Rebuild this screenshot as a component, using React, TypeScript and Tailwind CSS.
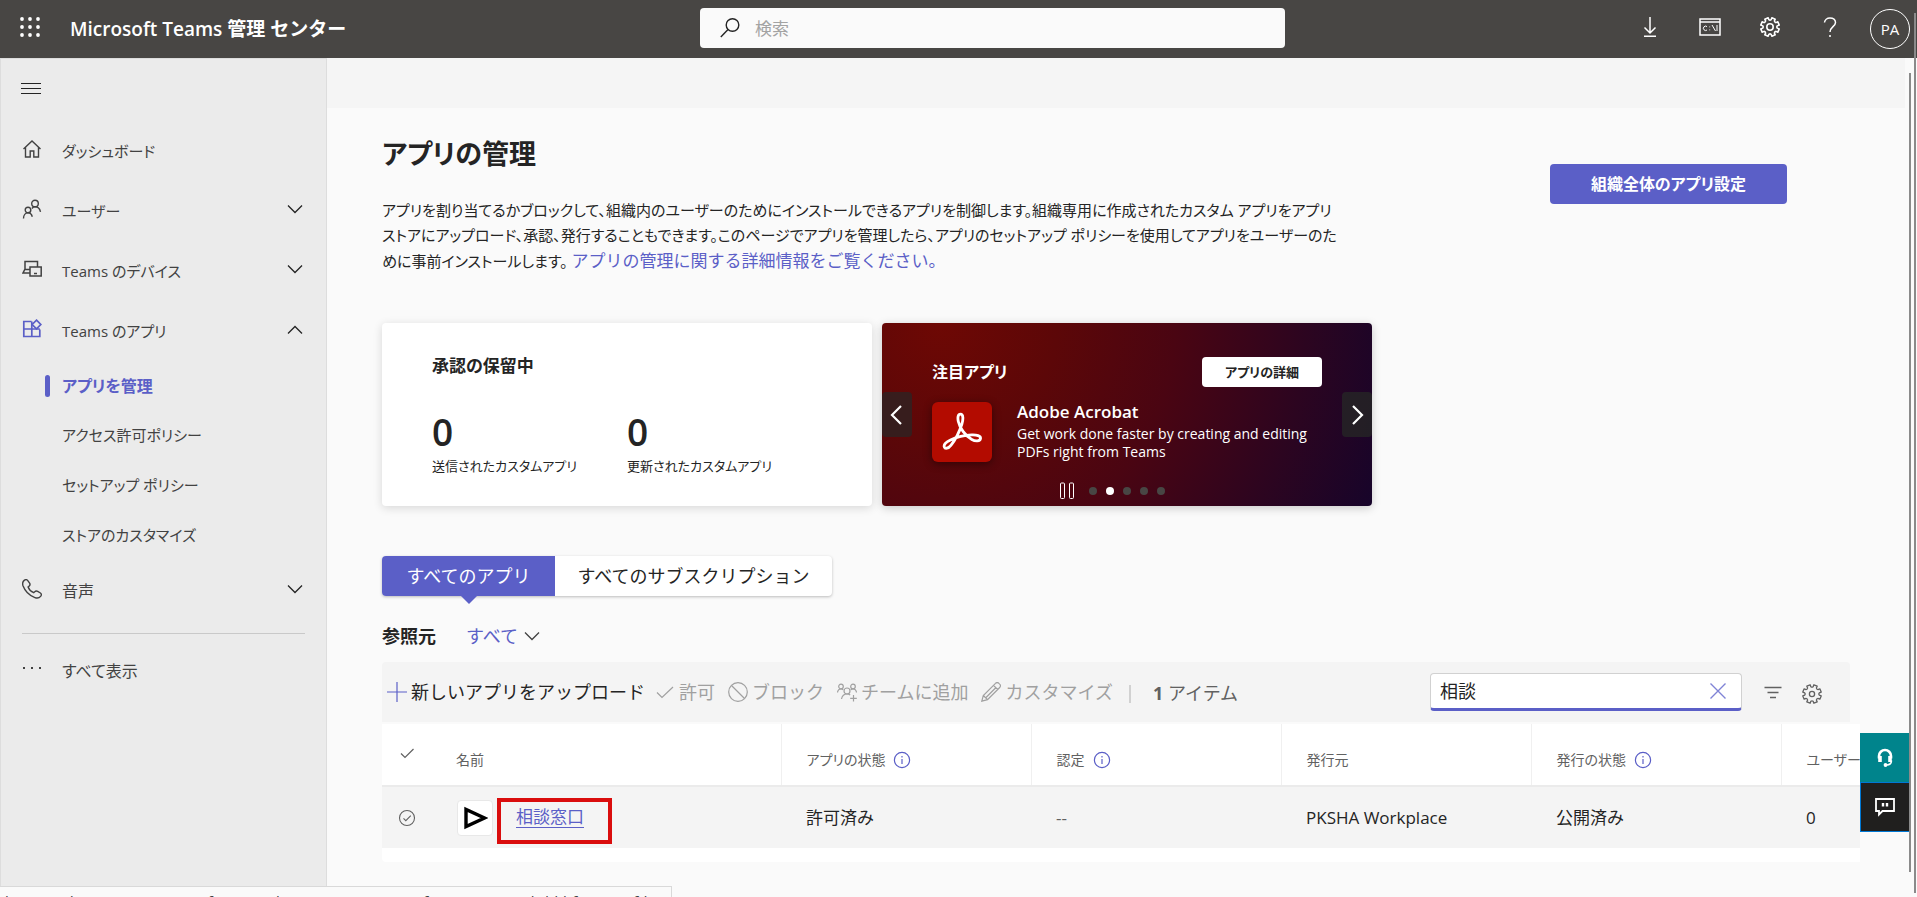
import type { ReactNode } from 'react';

type IconProps = { className?: string };

const Svg = ({ size, children, className = '', sw = 1.2 }: { size: number; children: ReactNode; className?: string; sw?: number }) => (
  <svg
    width={size}
    height={size}
    viewBox={`0 0 ${size} ${size}`}
    fill="none"
    stroke="currentColor"
    strokeWidth={sw}
    className={`shrink-0 ${className}`}
    aria-hidden="true"
  >
    {children}
  </svg>
);

const gearPath = (() => {
  const c = 10;
  const pts: string[] = [];
  for (let i = 0; i < 8; i++) {
    const a = (i * Math.PI) / 4 + Math.PI / 8;
    const p = (r: number, d: number) => `${(c + r * Math.cos(a + d)).toFixed(2)} ${(c + r * Math.sin(a + d)).toFixed(2)}`;
    pts.push(`${i === 0 ? 'M' : 'L'}${p(7.4, -0.24)} L${p(9.4, -0.19)} L${p(9.4, 0.19)} L${p(7.4, 0.24)}`);
    pts.push(`Q${p(6.4, Math.PI / 8)} ${p(7.4, Math.PI / 4 - 0.24)}`);
  }
  return pts.join(' ') + 'Z';
})();

const Gear = ({ hole = 3.2, className, sw = 1.3 }: IconProps & { hole?: number; sw?: number }) => (
  <Svg size={20} className={className} sw={sw}>
    <path d={gearPath} strokeLinejoin="round" />
    <circle cx="10" cy="10" r={hole} />
  </Svg>
);

const Chevron = ({ up = false, className = '' }: IconProps & { up?: boolean }) => (
  <Svg size={16} className={className} sw={1.3}>
    <path d={up ? 'M1 12.500 8 5.500l7 7' : 'M1 4.5l7 7 7-7'} />
  </Svg>
);

const Info = () => (
  <Svg size={18} className="text-[#5b5fc7]">
    <circle cx="9" cy="9" r="7.6" />
    <path d="M9 8v5M9 5v1.5" />
  </Svg>
);

const HomeIcon = () => (
  <Svg size={20} sw={1.4}>
    <path d="M1.5 10 10 2l8.500 8M3.500 8.500V18h4.700v-6h3.600v6h4.700V8.500" />
  </Svg>
);
const PeopleIcon = () => (
  <Svg size={20} sw={1.4}>
    <circle cx="13" cy="4.500" r="3.300" />
    <circle cx="6" cy="11" r="2.800" />
    <path d="M1.500 19.500c0-3.500 2-5.700 4.500-5.700s3.700 1.700 4.300 4M10 9.500c.8-1.200 1.800-1.700 3-1.700 2.800 0 4.800 2 5.500 5" />
  </Svg>
);
const DevicesIcon = () => (
  <Svg size={20} sw={1.5}>
    <path d="M8 14H1l2-4V2.500h12.500V8M3 10.500h5" />
    <rect x="8" y="8" width="11.200" height="9" />
    <path d="M12 14.500h3" />
  </Svg>
);
const AppsIcon = () => (
  <Svg size={20} className="text-[#5b5fc7]" sw={1.7}>
    <path d="M9.500 2.500H1.800v15h16V10.500M9.800 2.500v15M1.800 10h16" />
    <path d="m14.500 1.200 4.300 4.300-4.300 4.300-4.300-4.300z" />
  </Svg>
);
const PhoneIcon = () => (
  <Svg size={20} sw={1.4}>
    <path d="M2.200 1.400C3.500.4 5 .6 5.800 1.600L7.600 4.200c.7 1 .3 2.200-.6 3l-.9.800c.7 2 3.300 4.800 5.600 5.700l1-.9c.8-.8 2-1 3-.4l2.700 1.600c1.200.8 1.200 2.300.2 3.400-1.500 1.800-3.600 2-5.700 1.200C7.500 16.500 3 12 1 6.700.3 4.600.6 2.700 2.200 1.400z" />
  </Svg>
);
const MoreIcon = () => (
  <Svg size={20}>
    <g fill="currentColor" stroke="none">
      <rect x="1" y="8" width="2" height="2" />
      <rect x="9" y="8" width="2" height="2" />
      <rect x="17" y="8" width="2" height="2" />
    </g>
  </Svg>
);

const NavItem = ({ icon, label, state, large = false }: { icon: ReactNode; label: string; state?: 'open' | 'closed'; large?: boolean }) => (
  <li>
    <button className="flex h-[60px] w-full items-center pr-[23px] pl-[21px] text-left text-[#424242]">
      {icon}
      <span
        className={
          large
            ? "mt-1 ml-5 flex-1 text-base leading-6 [font-feature-settings:'palt']"
            : "mt-1 ml-5 flex-1 text-[15px] leading-6 [font-feature-settings:'palt']"
        }
      >
        {label}
      </span>
      {state && <Chevron up={state === 'open'} className="text-[#242424]" />}
    </button>
  </li>
);

const SubItem = ({ label, active = false }: { label: string; active?: boolean }) => (
  <li className="flex h-[50px] items-center pt-[3px] pl-11">
    <span className={active ? 'h-[22px] w-[5px] rounded-full bg-[#5b5fc7]' : 'w-[5px]'} />
    <a
      href="#apps"
      className={
        active
          ? "ml-3 text-base font-bold text-[#5b5fc7] [font-feature-settings:'palt']"
          : "ml-3 text-[15px] text-[#424242] [font-feature-settings:'palt']"
      }
    >
      {label}
    </a>
  </li>
);

const HeaderCell = ({ label, info = false }: { label: string; info?: boolean }) => (
  <th className="border-r border-[#f0f0f0] p-0 pl-[25px] text-left text-sm font-normal whitespace-nowrap text-[#616161]">
    <span className="mt-[10px] flex items-center gap-2">
      <span className="[font-feature-settings:'palt']">{label}</span>
      {info && <Info />}
    </span>
  </th>
);

const Tool = ({ icon, label, primary = false }: { icon: ReactNode; label: string; primary?: boolean }) => (
  <button className={primary ? 'flex items-center gap-1 text-[#242424]' : 'flex items-center gap-1 text-[#a0a0a0]'}>
    {icon}
    <span>{label}</span>
  </button>
);

function TopBar() {
  return (
    <header className="flex h-[58px] shrink-0 items-center bg-[#484644] pr-[7px] text-white">
      <div className="flex w-[700px] shrink-0 items-center">
        <button aria-label="アプリ起動ツール" className="-mt-1 ml-5">
          <svg width="20" height="20" viewBox="0 0 20 20" fill="currentColor" aria-hidden="true">
            {[2, 10, 18].map((y) => [2, 10, 18].map((x) => <circle key={`${x}-${y}`} cx={x} cy={y} r="1.9" />))}
          </svg>
        </button>
        <span className="ml-[30px] text-[19px] font-semibold">Microsoft Teams 管理 センター</span>
      </div>
      <label className="-mt-0.5 flex h-10 w-[585px] items-center rounded bg-[#fafafa] pl-5">
        <Svg size={20} className="text-[#242424]" sw={1.4}>
          <circle cx="12.500" cy="7" r="6.300" />
          <path d="M8 11.500.8 19" />
        </Svg>
        <input aria-label="検索" placeholder="検索" className="ml-[15px] flex-1 bg-transparent outline-none placeholder:text-[#a3a3a3]" />
      </label>
      <div className="ml-auto flex items-center">
        <button aria-label="ダウンロード" className="-mt-1 flex w-[60px] justify-center">
          <Svg size={20} sw={1.5}>
            <path d="M10 0v15.500M4.500 10.500l5.500 5.500 5.500-5.500M4 19.200h12" />
          </Svg>
        </button>
        <button aria-label="PowerShell" className="-mt-1 flex w-[60px] justify-center">
          <svg width="22" height="18" viewBox="0 0 22 18" fill="none" stroke="currentColor" strokeWidth="1.500" aria-hidden="true">
            <rect x="1" y="1" width="20" height="16" />
            <path d="M1 4h20" />
            <path d="M8 8.600A2.200 2.200 0 1 0 8 12M10.700 8.500v.8M10.700 11.500v.8M13 7l3.500 6M18 7v6" strokeWidth="1" />
          </svg>
        </button>
        <button aria-label="設定" className="-mt-1 flex w-[60px] justify-center">
          <Gear sw={1.6} />
        </button>
        <button aria-label="ヘルプ" className="-mt-1 flex w-[60px] justify-center">
          <Svg size={20} sw={1.5}>
            <path d="M4.500 5.500A5.500 5 0 0 1 10 .9c3.200 0 5.500 1.900 5.500 4.600 0 4-5.500 4.500-5.500 9.500M10 18v2" />
          </Svg>
        </button>
        <button className="ml-[10px] size-10 rounded-full border border-white text-[15px]">PA</button>
      </div>
    </header>
  );
}

function Sidebar() {
  return (
    <nav className="w-[327px] shrink-0 border border-[#dddddd] bg-[#ebebeb]">
      <button aria-label="ナビゲーション" className="mt-5 ml-5 block text-[#242424]">
        <Svg size={20} sw={1}>
          <path d="M0 4.500h20M0 9.500h20M0 14.500h20" />
        </Svg>
      </button>
      <ul className="mt-5">
        <NavItem icon={<HomeIcon />} label="ダッシュボード" />
        <NavItem icon={<PeopleIcon />} label="ユーザー" state="closed" />
        <NavItem icon={<DevicesIcon />} label="Teams のデバイス" state="closed" />
        <NavItem icon={<AppsIcon />} label="Teams のアプリ" state="open" />
        <SubItem label="アプリを管理" active />
        <SubItem label="アクセス許可ポリシー" />
        <SubItem label="セットアップ ポリシー" />
        <SubItem label="ストアのカスタマイズ" />
        <NavItem icon={<PhoneIcon />} label="音声" state="closed" large />
      </ul>
      <hr className="mx-[21px] mt-[14px] mb-[5px] border-[#c9c9c9]" />
      <ul>
        <NavItem icon={<MoreIcon />} label="すべて表示" large />
      </ul>
    </nav>
  );
}

function PendingCard() {
  return (
    <section className="h-[183px] w-[490px] rounded bg-white px-[50px] pt-[31px] shadow-[0_2px_10px_rgba(0,0,0,0.14)]">
      <h2 className="leading-6 font-bold [font-feature-settings:'palt']">承認の保留中</h2>
      <dl className="mt-[34px] grid grid-cols-2">
        {['送信されたカスタムアプリ', '更新されたカスタムアプリ'].map((t) => (
          <div key={t} className="flex flex-col-reverse">
            <dt className="mt-0.5 text-[13px] leading-6 whitespace-nowrap [font-feature-settings:'palt']">{t}</dt>
            <dd className="text-[37px] leading-10 font-semibold">0</dd>
          </div>
        ))}
      </dl>
    </section>
  );
}

function FeaturedCard() {
  return (
    <section className="flex h-[183px] w-[490px] items-center justify-between rounded bg-[radial-gradient(circle_at_12%_0%,#6e0804_0%,#5c0708_25%,#4a0512_50%,#2c0520_78%,#17042a_100%)] text-white shadow-[0_2px_10px_rgba(0,0,0,0.2)]">
      <button aria-label="前へ" className="flex h-[45px] w-[30px] shrink-0 items-center justify-center rounded bg-[#262626]/70">
        <Svg size={20} sw={2.2}>
          <path d="M14 1 5 10l9 9" />
        </Svg>
      </button>
      <div className="flex h-full flex-1 flex-col px-5 pt-[34px]">
        <div className="flex h-[30px] items-center justify-between">
          <h2 className="text-base leading-6 font-bold [font-feature-settings:'palt']">注目アプリ</h2>
          <button className="h-[30px] w-[120px] rounded bg-white text-[13px] font-semibold text-[#242424] [font-feature-settings:'palt']">
            アプリの詳細
          </button>
        </div>
        <div className="mt-[15px] flex">
          <div className="flex size-[60px] shrink-0 items-center justify-center rounded-md bg-[#b30b00] shadow-[0_2px_8px_rgba(0,0,0,0.45)]">
            <svg width="40" height="40" viewBox="0 0 40 40" fill="none" stroke="#fff" strokeWidth="2.800" aria-hidden="true">
              <path
                strokeLinejoin="round"
                d="M18.500 2.200c-2.600 0-3 3.500-2.200 7.300 1.300 6 6.800 14.300 13.500 18 3.500 1.900 8.300 2 8.700-1 .4-2.700-4-3.800-8.700-3.600-7 .3-15.500 2.300-21.300 5-4 1.900-7 4.600-6.200 7 .8 2.200 4 1.700 6.600-1.600 4.300-5.300 9-15 11-21.300 1.300-4.300 1.700-9.800-1.400-9.800z"
              />
            </svg>
          </div>
          <div className="ml-[25px]">
            <h3 className="leading-5 font-semibold">Adobe Acrobat</h3>
            <p className="mt-[3px] text-sm leading-[18px]">
              Get work done faster by creating and editing
              <br />
              PDFs right from Teams
            </p>
          </div>
        </div>
        <div className="mt-5 flex items-center justify-center gap-[9px] pr-[30px]">
          <button aria-label="一時停止" className="mr-[5px]">
            <svg width="16" height="18" viewBox="0 0 16 18" fill="none" stroke="#fff" aria-hidden="true">
              <rect x="1.500" y="1" width="4" height="15.500" rx="1" />
              <rect x="10.500" y="1" width="4" height="15.500" rx="1" />
            </svg>
          </button>
          {[0, 1, 2, 3, 4].map((i) => (
            <span key={i} className={i === 1 ? 'size-2 rounded-full bg-white' : 'size-2 rounded-full bg-[#484644]'} />
          ))}
        </div>
      </div>
      <button aria-label="次へ" className="flex h-[45px] w-[30px] shrink-0 items-center justify-center rounded bg-[#262626]/80">
        <Svg size={20} sw={2.2}>
          <path d="m6 1 9 9-9 9" />
        </Svg>
      </button>
    </section>
  );
}

function Toolbar() {
  return (
    <div className="mr-[10px] mb-0.5 flex h-[60px] items-center rounded-t bg-[#f4f4f4] pl-[5px] text-lg whitespace-nowrap">
      <Tool
        primary
        label="新しいアプリをアップロード"
        icon={
          <Svg size={20} className="text-[#5b5fc7]">
            <path d="M10 0v20M0 10h20" />
          </Svg>
        }
      />
      <div className="ml-[10px] flex gap-[13px]">
        <Tool
          label="許可"
          icon={
            <Svg size={20}>
              <path d="M2 10.500 7 15.500 18 5" />
            </Svg>
          }
        />
        <Tool
          label="ブロック"
          icon={
            <Svg size={20}>
              <circle cx="10" cy="10" r="9.300" />
              <path d="m3.500 3.500 13 13" />
            </Svg>
          }
        />
        <Tool
          label="チームに追加"
          icon={
            <Svg size={20}>
              <circle cx="4" cy="4.500" r="2.300" />
              <circle cx="16" cy="4.500" r="2.300" />
              <circle cx="10" cy="9" r="3" />
              <path d="M.5 10.500c.3-2.300 1.500-3.500 3.500-3.500 1 0 1.700.3 2.300.8M19.500 10.500c-.3-2.300-1.500-3.500-3.500-3.500-1 0-1.700.3-2.300.8M4.500 17c.6-3 2.500-5 5.500-5 1.300 0 2.300.3 3.200 1M16.500 13v6.500M13.200 16.300h6.600" />
            </Svg>
          }
        />
        <Tool
          label="カスタマイズ"
          icon={
            <Svg size={20}>
              <path d="m.8 19.200 1.500-5.700L14.500 1.300a2.300 2.300 0 0 1 3.400 0l.8.8a2.300 2.300 0 0 1 0 3.400L6.500 17.700zM2.300 13.500l4.200 4.200M12.500 3.300l4.200 4.200M5 15.500l10-10" />
            </Svg>
          }
        />
      </div>
      <span className="mt-1 ml-4 h-[18px] w-0.5 bg-[#d1d1d1]" />
      <p className="mt-0.5 ml-[22px] text-[#616161]">
        <b>1</b> アイテム
      </p>
      <label className="ml-auto flex h-[38px] w-[312px] items-center rounded border border-b-3 border-[#d1d1d1] border-b-[#5b5fc7] bg-white pr-[14px] pl-[9px]">
        <input aria-label="アプリの検索" defaultValue="相談" className="min-w-0 flex-1 bg-transparent text-[#242424] outline-none" />
        <button aria-label="クリア" className="text-[#7f83d6]">
          <Svg size={18} sw={1.4}>
            <path d="m1.500 1.500 15 15M16.500 1.500l-15 15" />
          </Svg>
        </button>
      </label>
      <button aria-label="フィルター" className="mt-0.5 ml-[21px] text-[#616161]">
        <Svg size={20} sw={1.4}>
          <path d="M1.500 4.500h17M4.500 9.500h11M7 14.500h6" />
        </Svg>
      </button>
      <button aria-label="列の設定" className="mt-1 mr-7 ml-[19px] text-[#616161]">
        <Gear hole={2.6} />
      </button>
    </div>
  );
}

function AppsTable() {
  return (
    <div className="overflow-hidden rounded-bl bg-white pb-[14px]">
      <table className="w-[1649px] table-fixed border-collapse">
        <colgroup>
          <col className="w-[49px]" />
          <col className="w-[350px]" />
          <col span={5} className="w-[250px]" />
        </colgroup>
        <thead>
          <tr className="h-[62px] border-b-2 border-[#ebebeb]">
            <th className="p-0 text-[#616161]">
              <Svg size={14} className="mb-1 ml-[18px]">
                <path d="m1 7.500 4 4L13.500 3" />
              </Svg>
            </th>
            <HeaderCell label="名前" />
            <HeaderCell label="アプリの状態" info />
            <HeaderCell label="認定" info />
            <HeaderCell label="発行元" />
            <HeaderCell label="発行の状態" info />
            <HeaderCell label="ユーザーに利用可能" />
          </tr>
        </thead>
        <tbody>
          <tr className="h-[62px] bg-[#f4f4f4]">
            <td className="p-0 text-[#616161]">
              <label className="flex pl-4">
                <input type="checkbox" aria-label="相談窓口を選択" className="sr-only" />
                <Svg size={18} sw={1.1}>
                  <circle cx="9" cy="9" r="7.500" />
                  <path d="m5.500 9.300 2.300 2.300 5-5" />
                </Svg>
              </label>
            </td>
            <td className="p-0 pl-[25px]">
              <div className="flex items-center">
                <span className="ml-px flex size-9 items-center justify-center rounded border border-[#e8e8e8] bg-white">
                  <svg width="26" height="24" viewBox="0 0 26 24" fill="none" stroke="#000" strokeWidth="3.400" aria-hidden="true">
                    <path d="M4 3.500v17L22.500 12z" />
                  </svg>
                </span>
                <span className="mt-[6px] ml-1 flex h-[46px] w-[115px] items-center border-4 border-[#da0d0d] pl-[15px]">
                  <a href="#app" className="-mt-2 text-[#5b5fc7] underline underline-offset-4">
                    相談窓口
                  </a>
                </span>
              </div>
            </td>
            <td className="p-0 pl-[25px]">許可済み</td>
            <td className="p-0 pl-[25px] text-[#616161]">--</td>
            <td className="p-0 pl-[25px]">PKSHA Workplace</td>
            <td className="p-0 pl-[25px]">公開済み</td>
            <td className="p-0 pl-[25px]">0</td>
          </tr>
        </tbody>
      </table>
    </div>
  );
}

export default function App() {
  return (
    <div
      lang="ja"
      className="relative flex h-screen flex-col overflow-hidden bg-[#fafafa] font-['Open_Sans','Noto_Sans_CJK_JP',sans-serif] text-[17px] leading-[25px] text-[#242424]"
    >
      <TopBar />
      <div className="flex min-h-0 flex-1">
        <Sidebar />
        <main className="min-w-0 flex-1">
          <div className="mr-3 h-[50px] bg-[#f5f5f5]" />
          <div className="pr-[57px] pl-[55px]">
            <div className="flex items-start justify-between pt-7">
              <div>
                <h1 className="text-[27px] leading-9 font-bold [font-feature-settings:'palt']">アプリの管理</h1>
                <p className="mt-[26px] text-[15px] leading-[25px] whitespace-nowrap [font-feature-settings:'palt']">
                  アプリを割り当てるかブロックして、組織内のユーザーのためにインストールできるアプリを制御します。組織専用に作成されたカスタム アプリをアプリ
                  <br />
                  ストアにアップロード、承認、発行することもできます。このページでアプリを管理したら、アプリのセットアップ ポリシーを使用してアプリをユーザーのた
                  <br />
                  めに事前インストールします。
                  <a href="#details" className="ml-1 text-[17px] text-[#5b5fc7] [font-feature-settings:normal]">
                    アプリの管理に関する詳細情報をご覧ください。
                  </a>
                </p>
              </div>
              <button className="mt-7 mr-[73px] h-10 w-[237px] rounded bg-[#5b5fc7] text-base font-bold text-white [font-feature-settings:'palt']">
                組織全体のアプリ設定
              </button>
            </div>
            <div className="mt-[49px] flex gap-[10px]">
              <PendingCard />
              <FeaturedCard />
            </div>
            <div role="tablist" className="mt-[50px] flex w-fit rounded bg-white text-lg shadow-[0_1px_3px_rgba(0,0,0,0.25)]">
              <button role="tab" aria-selected="true" className="relative h-10 w-[173px] rounded-l bg-[#5b5fc7] text-white">
                すべてのアプリ
                <svg width="16" height="8" viewBox="0 0 16 8" className="absolute top-full left-1/2 -translate-x-1/2" aria-hidden="true">
                  <path d="M0 0h16L8 8z" fill="#5b5fc7" />
                </svg>
              </button>
              <button role="tab" aria-selected="false" className="h-10 w-[277px]">
                すべてのサブスクリプション
              </button>
            </div>
            <div className="mt-[26px] mb-3 flex h-7 items-center text-lg">
              <label htmlFor="source" className="font-bold">
                参照元
              </label>
              <div className="ml-[30px] flex items-center">
                <select id="source" className="w-[58px] appearance-none bg-transparent text-[#5b5fc7] outline-none">
                  <option>すべて</option>
                </select>
                <Chevron className="text-[#424242]" />
              </div>
            </div>
            <Toolbar />
            <AppsTable />
          </div>
        </main>
      </div>
      <div className="absolute top-[733px] right-[7px] flex w-[50px] flex-col">
        <button aria-label="サポート" className="flex h-[49px] items-center justify-center bg-[#00848c] text-white">
          <Svg size={20} sw={2.6}>
            <path d="M4 10.500V8a6 6 0 0 1 12 0v2.500" />
            <path d="M5 8v6M15 8v6" strokeWidth="3.600" />
            <path d="M16.500 12.500c0 3-2 4.300-4.500 4.500" strokeWidth="1.500" />
            <circle cx="10.500" cy="17" r="1.900" fill="currentColor" stroke="none" />
          </Svg>
        </button>
        <button aria-label="フィードバック" className="flex h-[50px] items-center justify-center border border-[#0078d4] bg-[#201f1e] text-white">
          <Svg size={20} sw={1.8}>
            <path d="M1 2h18v12H7.500L4 17.500V14H1z" />
            <path d="M8 6v3.500M12 6v3.500" strokeWidth="2.400" />
          </Svg>
        </button>
      </div>
      <div className="absolute top-[73px] right-[6px] bottom-[25px] w-0.5 bg-[#8a8a8a]" />
      <div className="absolute top-[13px] right-px bottom-1 w-0.5 bg-[#8a8a8a]" />
      <div className="absolute bottom-0 left-0 h-[11px] w-[672px] overflow-hidden border-t border-r border-[#d9d9d9] bg-[#fafafa] pt-1 pl-[5px] text-[15px] leading-5 whitespace-nowrap text-[#424242]">
        https://admin.teams.microsoft.com/policies/manage-apps/cfc95037-3e99-4bdd-bfae-9226fd50561d0
      </div>
    </div>
  );
}
